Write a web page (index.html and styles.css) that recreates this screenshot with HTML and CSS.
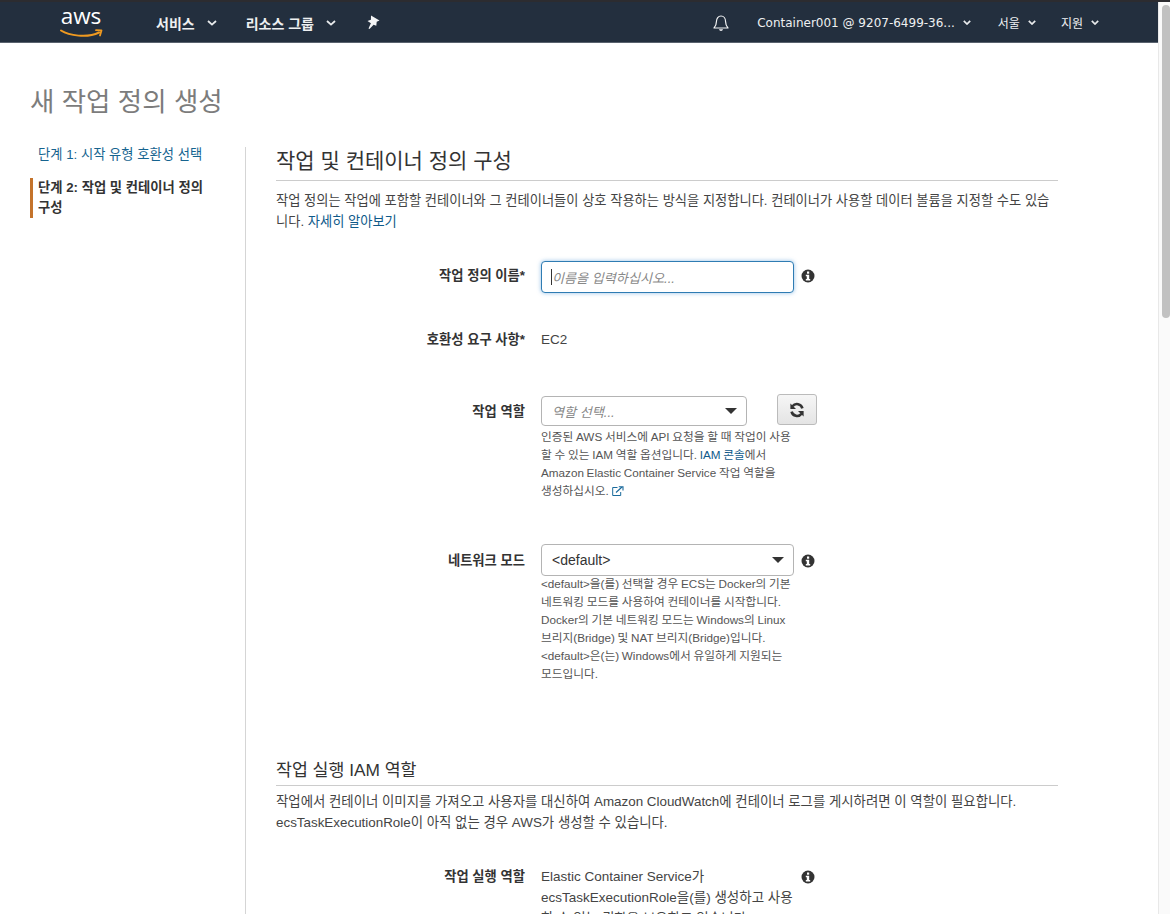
FILE: index.html
```html
<!DOCTYPE html>
<html lang="ko">
<head>
<meta charset="utf-8">
<title>새 작업 정의 생성</title>
<link rel="stylesheet" href="styles.css">
</head>
<body>
<div class="window">
  <div class="strip"></div>
  <div class="viewport">
    <div class="page">
      <nav class="nav">
        <div class="logo">
          <span class="logo-text">aws</span>
          <svg class="smile" width="44" height="10" viewBox="0 0 44 10"><path d="M1 1.500C9 6.500 27 9.500 39 3.500" fill="none" stroke="#f09a20" stroke-width="2" stroke-linecap="round"/><path d="M36 1.200l5.500.3-1.500 5" fill="none" stroke="#f09a20" stroke-width="1.800" stroke-linecap="round" stroke-linejoin="round"/></svg>
        </div>
        <div class="nav-item strong first">서비스<svg class="chev" width="10" height="6" viewBox="0 0 10 6"><path d="M1 1l4 3.600L9 1" fill="none" stroke="#e8eaec" stroke-width="1.800"/></svg></div>
        <div class="nav-item strong second">리소스 그룹<svg class="chev" width="10" height="6" viewBox="0 0 10 6"><path d="M1 1l4 3.600L9 1" fill="none" stroke="#e8eaec" stroke-width="1.800"/></svg></div>
        <svg class="pin" width="14" height="15" viewBox="0 0 14 15"><path d="M5 .5l8.500 5-2.800 1.300-.4 3.900-2.700-.9L3.500 14l-1-.6 2.400-5.200L1.500 6l3.400-1.300z" fill="#f4f5f6"/></svg>
        <div class="nav-right">
          <svg class="bell" width="18" height="18" viewBox="0 0 18 18"><path d="M2 14c1.600-1.600 2.400-3 2.400-6.200C4.400 4.400 6.400 2 9 2s4.600 2.400 4.600 5.800c0 3.200.8 4.600 2.400 6.200z" fill="none" stroke="#f2f3f4" stroke-width="1.200" stroke-linejoin="round"/><path d="M7 15.200h4c-.3 1.100-1 1.700-2 1.700s-1.700-.6-2-1.700z" fill="#f2f3f4"/></svg>
          <div class="nav-item account">Container001 @ 9207-6499-36...<svg class="caret" width="8" height="5" viewBox="0 0 8 5"><path d="M.8.8L4 4l3.200-3.200" fill="none" stroke="#e8eaec" stroke-width="1.700"/></svg></div>
          <div class="nav-item region">서울<svg class="caret" width="8" height="5" viewBox="0 0 8 5"><path d="M.8.8L4 4l3.200-3.200" fill="none" stroke="#e8eaec" stroke-width="1.700"/></svg></div>
          <div class="nav-item support">지원<svg class="caret" width="8" height="5" viewBox="0 0 8 5"><path d="M.8.8L4 4l3.200-3.200" fill="none" stroke="#e8eaec" stroke-width="1.700"/></svg></div>
        </div>
      </nav>
      <h1 class="title">새 작업 정의 생성</h1>
      <div class="columns">
        <aside class="steps">
          <a class="step link">단계 1: 시작 유형 호환성 선택</a>
          <div class="step current">단계 2: 작업 및 컨테이너 정의 구성</div>
        </aside>
        <main class="content">
          <h2 class="section">작업 및 컨테이너 정의 구성</h2>
          <p class="desc desc-intro">작업 정의는 작업에 포함할 컨테이너와 그 컨테이너들이 상호 작용하는 방식을 지정합니다. 컨테이너가 사용할 데이터 볼륨을 지정할 수도 있습니다. <a class="link">자세히 알아보기</a></p>

          <div class="row row-name">
            <label class="label">작업 정의 이름*</label>
            <div class="field"><div class="input"><span class="cursor"></span><span class="placeholder">이름을 입력하십시오...</span></div></div>
            <svg class="info" width="14" height="14" viewBox="0 0 14 14"><circle cx="7" cy="7" r="6.500" fill="#333"/><rect x="6" y="2.500" width="2.200" height="2.200" fill="#fff"/><path d="M4.800 5.800h3.400v4.200h1v1.400H4.800V10h1V7.200h-1z" fill="#fff"/></svg>
          </div>

          <div class="row row-compat">
            <label class="label">호환성 요구 사항*</label>
            <div class="field value">EC2</div>
          </div>

          <div class="row row-role">
            <label class="label">작업 역할</label>
            <div class="field">
              <div class="role-line">
                <div class="select select-role"><span class="placeholder">역할 선택...</span><span class="arrow"></span></div>
                <button class="refresh"><svg width="16" height="16" viewBox="0 0 16 16"><path d="M13.400 6.400A5.600 5.600 0 0 0 3.500 4.300" fill="none" stroke="#333" stroke-width="2.600"/><path d="M1.400 1.400v5.600h5.600z" fill="#333"/><path d="M2.600 9.600a5.600 5.600 0 0 0 9.900 2.100" fill="none" stroke="#333" stroke-width="2.600"/><path d="M14.600 14.600V9H9z" fill="#333"/></svg></button>
              </div>
              <p class="help help-role">인증된 AWS 서비스에 API 요청을 할 때 작업이 사용 할 수 있는 IAM 역할 옵션입니다. <a class="link">IAM 콘솔</a>에서 Amazon Elastic Container Service 작업 역할을 생성하십시오. <svg class="ext" width="12" height="10" viewBox="0 0 12 10"><path d="M5.500 1.500H.7v8h8V6" fill="none" stroke="#1a6a9c" stroke-width="1"/><path d="M4 6.500L10 1M6.800.7H11v3.800" fill="none" stroke="#1a6a9c" stroke-width="1.100"/></svg></p>
            </div>
          </div>

          <div class="row row-network">
            <label class="label">네트워크 모드</label>
            <div class="field">
              <div class="select"><span class="select-value">&lt;default&gt;</span><span class="arrow"></span></div>
              <p class="help help-network">&lt;default&gt;을(를) 선택할 경우 ECS는 Docker의 기본 네트워킹 모드를 사용하여 컨테이너를 시작합니다. Docker의 기본 네트워킹 모드는 Windows의 Linux 브리지(Bridge) 및 NAT 브리지(Bridge)입니다. &lt;default&gt;은(는) Windows에서 유일하게 지원되는 모드입니다.</p>
            </div>
            <svg class="info" width="14" height="14" viewBox="0 0 14 14"><circle cx="7" cy="7" r="6.500" fill="#333"/><rect x="6" y="2.500" width="2.200" height="2.200" fill="#fff"/><path d="M4.800 5.800h3.400v4.200h1v1.400H4.800V10h1V7.200h-1z" fill="#fff"/></svg>
          </div>

          <h3 class="subsection">작업 실행 IAM 역할</h3>
          <p class="desc">작업에서 컨테이너 이미지를 가져오고 사용자를 대신하여 Amazon CloudWatch에 컨테이너 로그를 게시하려면 이 역할이 필요합니다. ecsTaskExecutionRole이 아직 없는 경우 AWS가 생성할 수 있습니다.</p>

          <div class="row row-exec">
            <label class="label">작업 실행 역할</label>
            <div class="field value">Elastic Container Service가 ecsTaskExecutionRole을(를) 생성하고 사용할 수 있는 권한을 보유하고 있습니다.</div>
            <svg class="info" width="14" height="14" viewBox="0 0 14 14"><circle cx="7" cy="7" r="6.500" fill="#333"/><rect x="6" y="2.500" width="2.200" height="2.200" fill="#fff"/><path d="M4.800 5.800h3.400v4.200h1v1.400H4.800V10h1V7.200h-1z" fill="#fff"/></svg>
          </div>
        </main>
      </div>
    </div>
    <div class="scrollbar"><div class="thumb"></div></div>
  </div>
</div>
</body>
</html>
```
FILE: styles.css
```css
* { box-sizing: border-box; }
html, body { margin: 0; height: 100%; overflow: hidden; background: #fff; }
body { font-family: "Liberation Sans", "Noto Sans CJK KR", sans-serif; font-size: 13.5px; color: #444; }
a { text-decoration: none; }
p { margin: 0; }
.window { height: 914px; display: flex; flex-direction: column; overflow: hidden; }
.strip { height: 2px; background: #2c2c30; flex: none; }
.viewport { flex: 1; min-height: 0; display: flex; overflow: hidden; }
.page { flex: 1; min-width: 0; overflow: hidden; }

.scrollbar { width: 12px; flex: none; background: #fafafa; border-left: 1px solid #e8e8e8; padding: 3px 0 0 3px; }
.thumb { width: 8px; height: 313px; border-radius: 4px; background: #c1c1c1; }

.nav { height: 41px; background: #232f3e; border-bottom: 1px solid #59626e; display: flex; align-items: center; color: #eef0f1; padding-top: 1px; }
.logo { width: 44px; margin-left: 59px; height: 30px; position: relative; flex: none; }
.logo-text { display: block; font-family: "Open Sans", sans-serif; font-size: 22.5px; line-height: 23px; color: #fff; text-align: center; margin-top: -4px; }
.smile { position: absolute; left: 1px; top: 21px; }
.nav-item { display: flex; align-items: center; font-size: 12px; white-space: nowrap; }
.strong { font-size: 14px; font-family: "Noto Sans CJK KR", sans-serif; font-weight: 700; }
.first { margin-left: 53px; }
.second { margin-left: 29px; }
.chev { margin-left: 12px; }
.pin { margin-left: 30px; }
.nav-right { margin-left: auto; display: flex; align-items: center; padding-right: 59px; }
.account { font-family: "DejaVu Sans", "Noto Sans CJK KR", sans-serif; margin-left: 27px; }
.region { margin-left: 27px; }
.support { margin-left: 25px; }
.caret { margin-left: 8px; }

.title { margin: 43px 0 0 30px; font-size: 26.5px; line-height: 32px; font-weight: 400; color: #7c7c7c; }
.columns { display: flex; margin-top: 29px; margin-left: 30px; }
.steps { width: 216px; flex: none; border-right: 1px solid #d5d5d5; padding-right: 20px; min-height: 800px; word-break: keep-all; }
.step { display: block; font-size: 13.3px; line-height: 20px; padding-left: 8px; }
.step.link { color: #16648f; margin-top: -2px; }
.step.current { margin-top: 13px; border-left: 3px solid #c4732b; padding-left: 5px; font-weight: 700; color: #333; }
.link { color: #0f5a8a; }

.content { width: 812px; padding-left: 30px; }
.section { margin: 1px 0 0; font-size: 21px; line-height: 26px; font-weight: 400; color: #333; padding-bottom: 6px; border-bottom: 1px solid #ccc; }
.desc { font-size: 13.4px; line-height: 21px; color: #444; margin-top: 9px; }
.desc-intro { font-size: 13.25px; }

.row { display: flex; align-items: flex-start; }
.label { width: 249px; flex: none; text-align: right; font-size: 13.3px; font-weight: 700; color: #333; line-height: 20px; }
.field { width: 253px; margin-left: 16px; flex: none; }
.value { line-height: 21px; font-size: 13.5px; color: #444; }
.info { margin-left: 7px; margin-top: 8px; flex: none; }
.row-name { margin-top: 29px; }
.row-name .label { margin-top: 5px; }
.row-compat { margin-top: 36px; }
.row-compat .label { margin-top: 1px; }
.row-role { margin-top: 46px; }
.row-role .label { margin-top: 6px; }
.row-network { margin-top: 44px; }
.row-network .label { margin-top: 7px; }
.row-network .info { margin-top: 10px; }
.row-exec { margin-top: 33px; }
.row-exec .label { margin-top: 1px; }
.row-exec .info { margin-top: 4px; }

.input { height: 32px; border: 1px solid #2f7cb3; border-radius: 4px; box-shadow: 0 0 4px rgba(60,140,210,.55); padding-left: 9px; display: flex; align-items: center; background: #fff; }
.cursor { width: 1px; height: 16px; background: #333; }
.placeholder { font-style: italic; font-size: 13.1px; color: #888; }
.select { height: 32px; border: 1px solid #b4b4b4; border-radius: 4px; background: #fff; display: flex; align-items: center; justify-content: space-between; padding: 0 10px; }
.select-role { width: 206px; height: 30px; flex: none; }
.select-value { font-size: 14px; color: #333; }
.arrow { width: 0; height: 0; border-left: 6px solid transparent; border-right: 6px solid transparent; border-top: 6px solid #333; margin-right: -1px; }
.role-line { display: flex; align-items: flex-start; }
.refresh { width: 40px; height: 31px; margin: -2px 0 0 30px; flex: none; border: 1px solid #bbb; border-radius: 3px; background: linear-gradient(#f6f6f6, #e4e4e4); padding: 0; display: flex; align-items: center; justify-content: center; }
.help { font-size: 11.7px; line-height: 18px; color: #555; word-break: keep-all; word-spacing: -.5px; }
.help-role { margin-top: 2px; }
.help-network { margin-top: -1px; }
.ext { vertical-align: -1px; }
.subsection { margin: 75px 0 0; font-size: 17.3px; line-height: 24px; font-weight: 400; color: #333; padding-bottom: 3px; border-bottom: 1px solid #ccc; }
.subsection + .desc { margin-top: 5px; }
```
